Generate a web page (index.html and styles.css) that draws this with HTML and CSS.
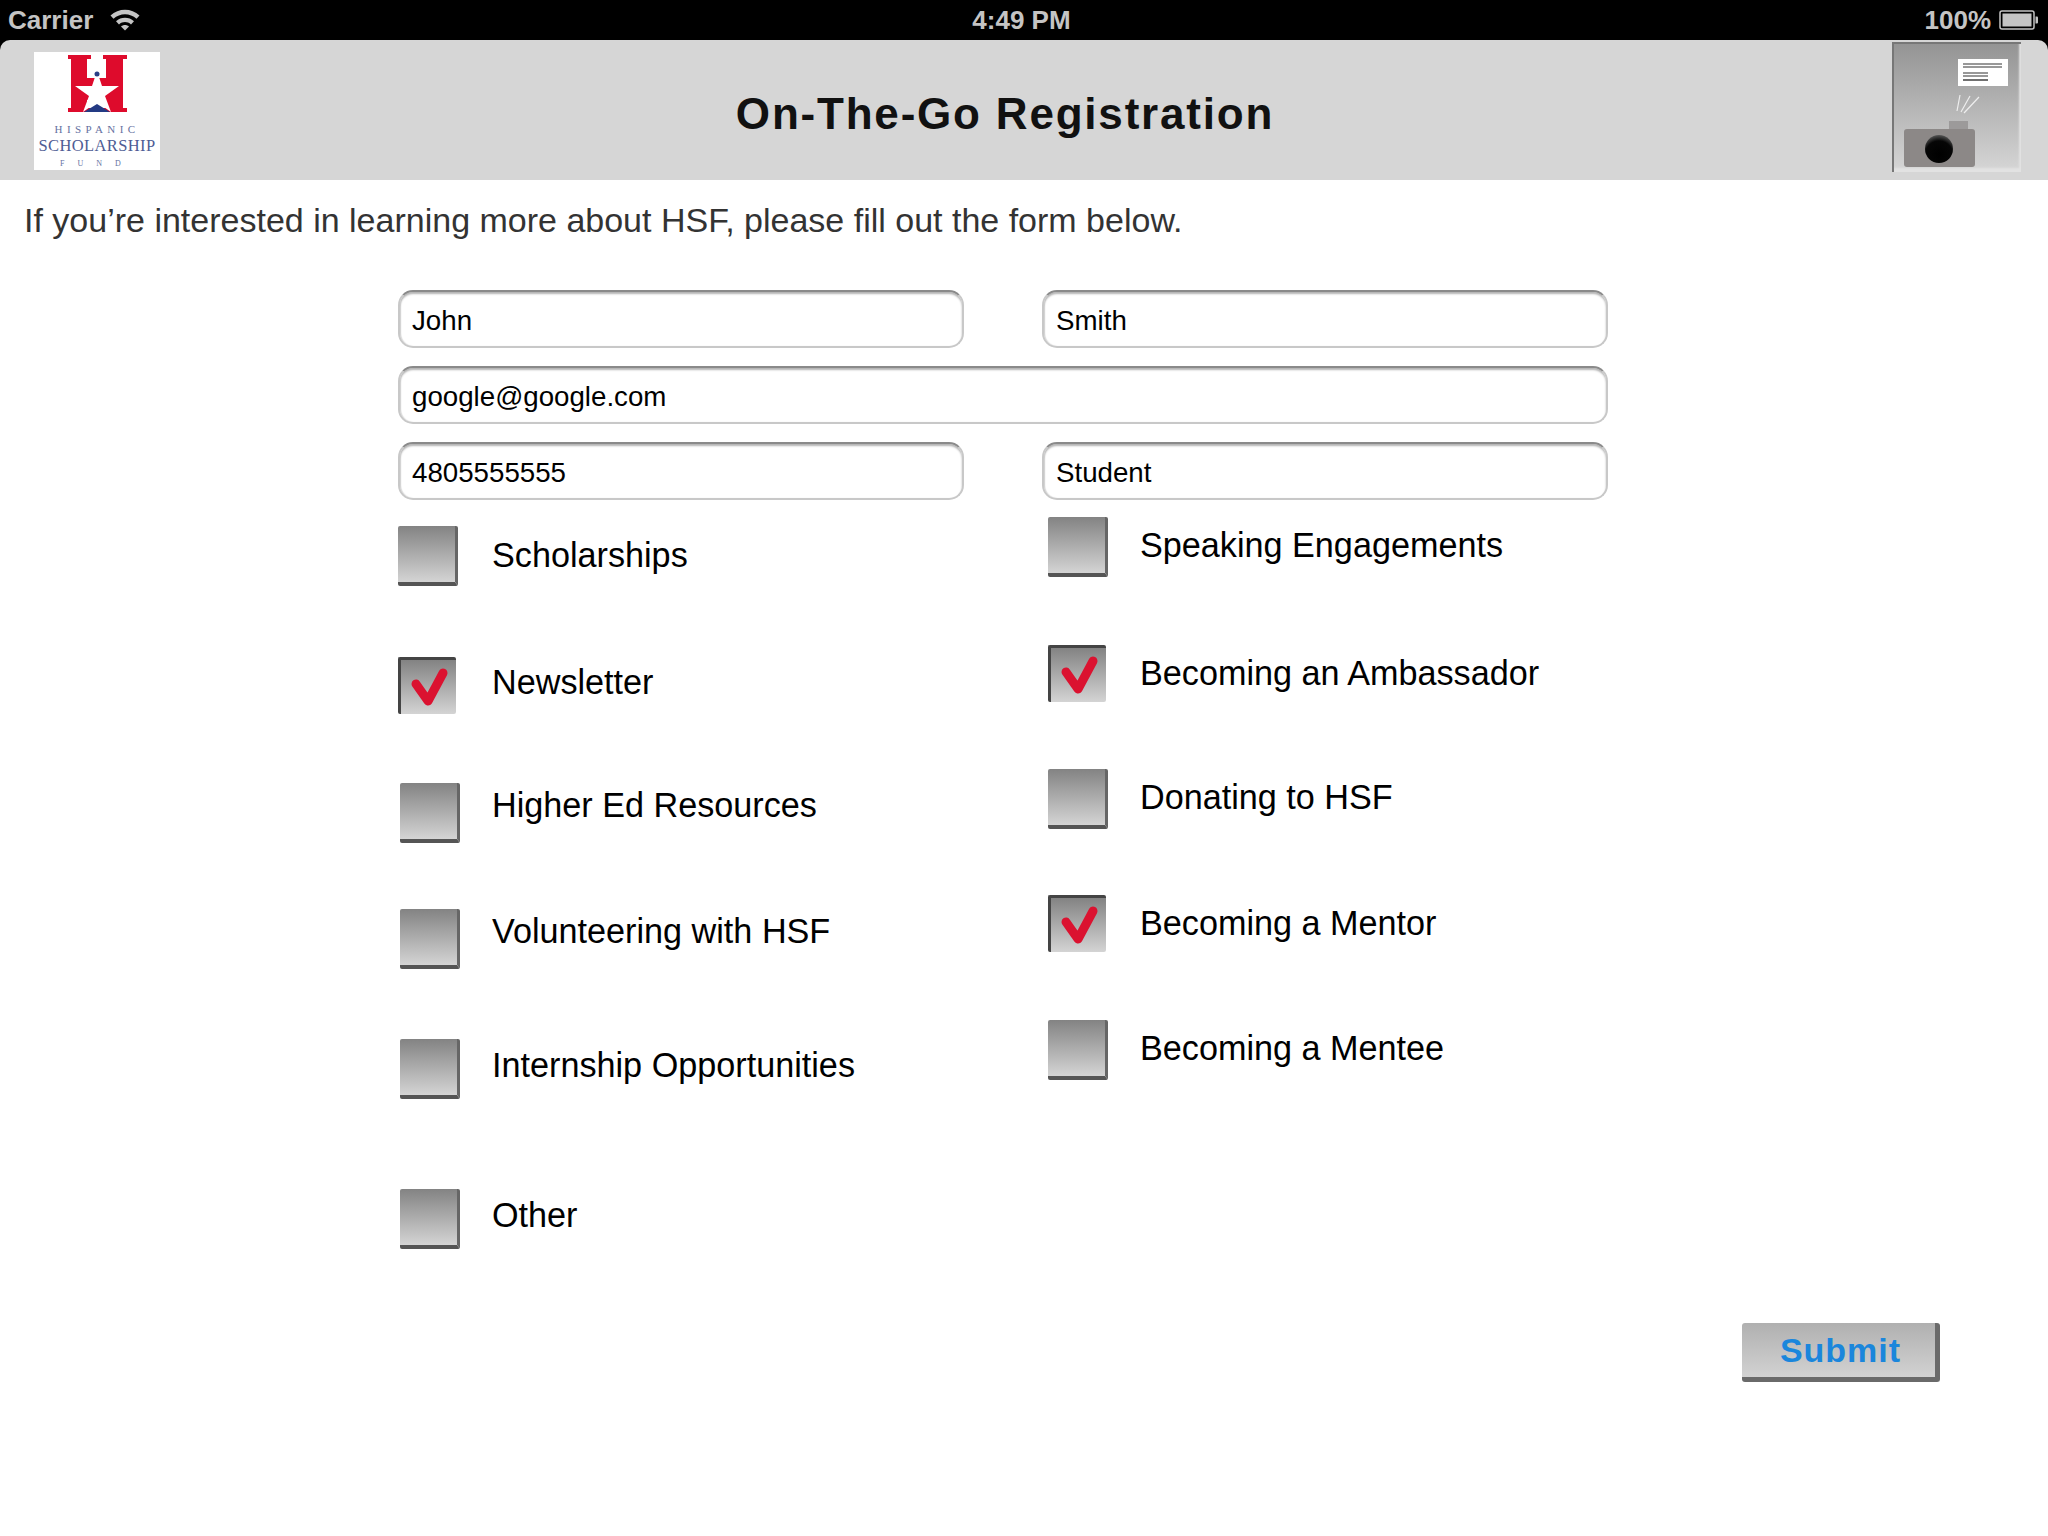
FILE: index.html
```html
<!DOCTYPE html>
<html lang="en">
<head>
    <meta charset="UTF-8">
    <title>On-The-Go Registration</title>
    <link rel="stylesheet" href="styles.css">
</head>
<body>
    <div class="top">
        <div class="status-bar">
            <div class="status-left">
                <span>Carrier</span>
                <svg class="wifi" width="32" height="24" viewBox="0 0 32 24">
                    <path d="M1.5 8.5C9.5 0.8 22.5 0.8 30.5 8.5L27.5 11.8C21 5.8 11 5.8 4.5 11.8Z" fill="#c4c4c4"/>
                    <path d="M7 14.2C12 9.6 20 9.6 25 14.2L22 17.4C18.4 14.2 13.6 14.2 10 17.4Z" fill="#c4c4c4"/>
                    <path d="M12 19.6C14.4 17.6 17.6 17.6 20 19.6L16 23.6Z" fill="#c4c4c4"/>
                </svg>
            </div>
            <div class="status-time">4:49 PM</div>
            <div class="status-right">
                <span>100%</span>
                <svg width="40" height="20" viewBox="0 0 40 20">
                    <rect x="1" y="1" width="34" height="18" rx="2" fill="none" stroke="#c4c4c4" stroke-width="1.5"/>
                    <rect x="3.5" y="3.5" width="29" height="13" fill="#c4c4c4"/>
                    <path d="M36.5 6.5h1.5a1 1 0 0 1 1 1v5a1 1 0 0 1 -1 1h-1.5z" fill="#c4c4c4"/>
                </svg>
            </div>
        </div>
        <header class="app-header">
            <svg class="logo" width="126" height="118" viewBox="0 0 126 118">
                <rect width="126" height="118" fill="#fff"/>
                <path d="M34 3H57V7H53V26H72V7H69V3H93V7H89V56H93V60H69V56H72V48H53V56H57V60H34V56H37V7H34Z" fill="#de0b2c"/>
                <polygon points="63,19 68,34 85,34 71,44 77,60 63,50 49,60 55,44 41,34 58,34" fill="#fff"/>
                <circle cx="63" cy="22" r="2.5" fill="#2b3f86"/>
                <polygon points="50,60 63,52 76,60" fill="#233a83"/>
                <text class="logo-line1" x="63" y="81" text-anchor="middle">HISPANIC</text>
                <text class="logo-line2" x="63" y="99" text-anchor="middle">SCHOLARSHIP</text>
                <text class="logo-line3" x="63" y="114" text-anchor="middle">FUND</text>
            </svg>
            <h1 class="title">On-The-Go Registration</h1>
            <div class="camera-btn">
                <svg width="122" height="124" viewBox="0 0 122 124">
                    <defs>
                        <radialGradient id="lens" cx="0.5" cy="0.7" r="0.7">
                            <stop offset="0" stop-color="#000"/>
                            <stop offset="0.7" stop-color="#060606"/>
                            <stop offset="1" stop-color="#555"/>
                        </radialGradient>
                    </defs>
                    <rect x="61" y="12" width="50" height="27" fill="#fff"/>
                    <path d="M66 17H105M66 20H105M66 26H91M66 29H91" stroke="#777" stroke-width="1.3"/>
                    <path d="M66 33H91" stroke="#222" stroke-width="1.3"/>
                    <path d="M60 64L63 48M64 65L73 49M67 66L82 50" stroke="#eee" stroke-width="1.2"/>
                    <rect x="52" y="74" width="19" height="9" fill="#9c9a9a"/>
                    <rect x="7" y="82" width="71" height="38" rx="3" fill="#8c8887"/>
                    <circle cx="42" cy="102" r="14" fill="url(#lens)"/>
                </svg>
            </div>
        </header>
    </div>

    <p class="intro">If you’re interested in learning more about HSF, please fill out the form below.</p>

    <form class="reg-form">
        <div class="fields">
            <div class="field">John</div>
            <div class="field">Smith</div>
            <div class="field wide">google@google.com</div>
            <div class="field">4805555555</div>
            <div class="field">Student</div>
        </div>

        <div class="options">
            <div class="col col-left">
                <div class="opt"><span class="box"></span><span class="label">Scholarships</span></div>
                <div class="opt"><span class="box checked"><svg width="58" height="56" viewBox="0 0 58 56"><path d="M17 26L29 43L44 15" class="tick"/></svg></span><span class="label">Newsletter</span></div>
                <div class="opt"><span class="box"></span><span class="label">Higher Ed Resources</span></div>
                <div class="opt"><span class="box"></span><span class="label">Volunteering with HSF</span></div>
                <div class="opt"><span class="box"></span><span class="label">Internship Opportunities</span></div>
                <div class="opt"><span class="box"></span><span class="label">Other</span></div>
            </div>
            <div class="col col-right">
                <div class="opt"><span class="box"></span><span class="label">Speaking Engagements</span></div>
                <div class="opt"><span class="box checked"><svg width="58" height="56" viewBox="0 0 58 56"><path d="M17 26L29 43L44 15" class="tick"/></svg></span><span class="label">Becoming an Ambassador</span></div>
                <div class="opt"><span class="box"></span><span class="label">Donating to HSF</span></div>
                <div class="opt"><span class="box checked"><svg width="58" height="56" viewBox="0 0 58 56"><path d="M17 26L29 43L44 15" class="tick"/></svg></span><span class="label">Becoming a Mentor</span></div>
                <div class="opt"><span class="box"></span><span class="label">Becoming a Mentee</span></div>
            </div>
        </div>

        <div class="actions">
            <button type="button" class="submit">Submit</button>
        </div>
    </form>
</body>
</html>
```

FILE: styles.css
```css
body { margin: 0; background: #fff; font-family: "Liberation Sans", Arial, sans-serif; color: #000; }

.top { background: #000; }
.status-bar { height: 40px; display: grid; grid-template-columns: 1fr auto 1fr; align-items: center; padding: 0 9px 0 8px; color: #c4c4c4; font-size: 26px; font-weight: bold; }
.status-left { display: flex; align-items: center; gap: 16px; }
.status-time { padding-right: 4px; }
.status-right { display: flex; align-items: center; justify-content: flex-end; gap: 8px; }
.wifi { margin-top: -2px; }

.app-header { height: 140px; box-sizing: border-box; display: flex; align-items: flex-start; padding: 2px 27px 0 34px; background: #d6d6d6; border-radius: 10px 10px 0 0; }
.logo { margin-top: 10px; flex: none; }
.logo-line1 { font: 11px "Liberation Serif", serif; letter-spacing: 4.4px; fill: #65719f; }
.logo-line2 { font: 16.5px "Liberation Serif", serif; letter-spacing: 0.4px; fill: #4e5c94; }
.logo-line3 { font: 8px "Liberation Serif", serif; letter-spacing: 13px; fill: #65719f; }
.title { flex: 1; margin: 49px 42px 0 0; text-align: center; font-size: 44px; line-height: 46px; font-weight: bold; letter-spacing: 1.8px; color: #111; }
.camera-btn { flex: none; width: 129px; height: 130px; box-sizing: border-box; display: flex; align-items: flex-start; padding: 3px 0 0 3px; background: linear-gradient(#949494, #d6d6d6); border-top: 2px solid #777; border-left: 2px solid #777; box-shadow: inset -2px -4px 2px #e2e2e2; }

.intro { margin: 20px 0 0 24px; font-size: 34px; line-height: 40px; color: #333; }

.reg-form { width: 1210px; margin: 50px 0 0 398px; }
.fields { display: grid; grid-template-columns: 566px 566px; column-gap: 78px; row-gap: 18px; }
.field { height: 58px; box-sizing: border-box; padding-left: 12px; border: 2px solid #c8c8c8; border-top-color: #8a8a8a; border-radius: 15px; box-shadow: inset 0 2px 2px #b4b4b4, inset 1px 0 1px #ddd; font-size: 27.7px; line-height: 58px; }
.wide { grid-column: 1 / 3; }

.options { display: grid; grid-template-columns: 650px 1fr; font-size: 34.2px; }
.col { display: flex; flex-direction: column; }
.opt { display: flex; align-items: center; gap: 34px; height: 60px; }
.col-right .opt { gap: 32px; }
.col-left { padding-top: 26px; }
.col-right { padding-top: 17px; }
.col-right .label { padding-bottom: 4px; }
.col-left .opt:nth-child(1) .label { padding-bottom: 2px; }
.col-left .opt:nth-child(2) { margin-top: 71px; }
.col-left .opt:nth-child(2) .label { padding-bottom: 10px; }
.col-left .opt:nth-child(3) { margin-top: 66px; }
.col-left .opt:nth-child(3) .label { padding-bottom: 16px; }
.col-left .opt:nth-child(4) { margin-top: 66px; }
.col-left .opt:nth-child(4) .label { padding-bottom: 16px; }
.col-left .opt:nth-child(5) { margin-top: 70px; }
.col-left .opt:nth-child(5) .label { padding-bottom: 8px; }
.col-left .opt:nth-child(6) { margin-top: 90px; }
.col-left .opt:nth-child(6) .label { padding-bottom: 8px; }
.col-left .opt:nth-child(n+3) { gap: 32px; }
.col-left .opt:nth-child(n+3) .box { margin-left: 2px; }
.col-right .opt:nth-child(2) { margin-top: 68px; }
.col-right .opt:nth-child(3) { margin-top: 64px; }
.col-right .opt:nth-child(4) { margin-top: 66px; }
.col-right .opt:nth-child(5) { margin-top: 65px; }

.box { flex: none; width: 60px; height: 60px; box-sizing: border-box; background: linear-gradient(#838383, #d4d4d4); border-right: 3px solid #666; border-bottom: 4px solid #555; border-radius: 2px; }
.checked { width: 58px; height: 57px; margin-right: 2px; align-self: flex-start; border: 0; border-top: 3px solid #444; border-left: 3px solid #444; }
.checked svg { display: block; margin: -2px 0 0 -2px; }
.tick { fill: none; stroke: #db1230; stroke-width: 9px; stroke-linecap: round; stroke-linejoin: round; }

.actions { display: flex; justify-content: flex-end; padding-top: 74px; margin-right: -332px; }
.submit { width: 198px; height: 59px; padding: 0 0 0 4px; border: 0; border-right: 5px solid #6a6a6a; border-bottom: 5px solid #6a6a6a; border-radius: 3px; background: linear-gradient(#b0b0b0, #d2d2d2); color: #1a86dc; font: bold 34px "Liberation Sans", Arial, sans-serif; letter-spacing: 1px; }
```
